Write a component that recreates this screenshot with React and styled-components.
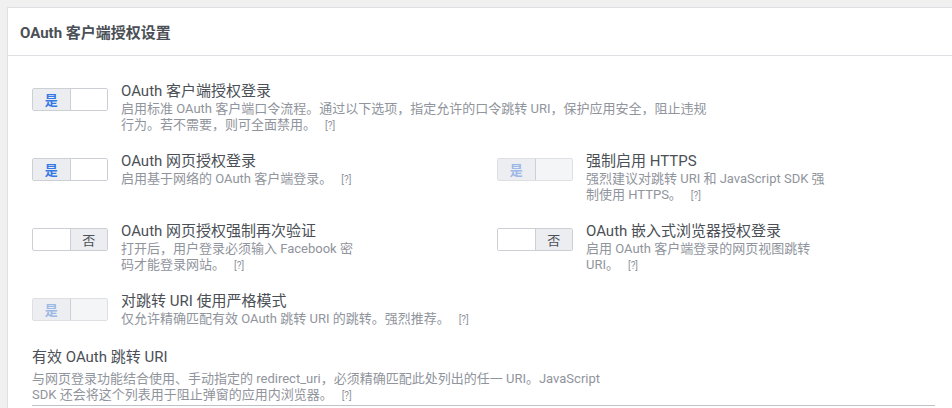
import React from "react";
import styled, { createGlobalStyle } from "styled-components";

const GlobalStyle = createGlobalStyle`
  html, body {
    margin: 0;
    padding: 0;
    background: #f0f0f0;
    overflow: hidden;
  }
  body {
    font-family: Roboto, "Noto Sans CJK SC", sans-serif;
  }
`;

const Page = styled.div`
  padding: 7px 0 0 7px;
  width: 945px;
  height: 401px;
  overflow: hidden;
`;

const Card = styled.div`
  width: 953px;
  background: #fff;
  border: 1px solid #dddfe2;
  border-right: none;
`;

const Header = styled.div`
  height: 47px;
  display: flex;
  align-items: center;
  padding: 0 12px;
  border-bottom: 1px solid #dddfe2;
  font-size: 15px;
  font-weight: bold;
  color: #4b4f56;
`;

const Body = styled.div`
  padding: 25px 25px 0 24px;
  display: flex;
  flex-direction: column;
  gap: 18px;
`;

const Grid = styled.div`
  display: grid;
  grid-template-columns: 465px 1fr;
`;

const Setting = styled.div`
  display: flex;
  align-items: flex-start;
  gap: 13px;
`;

const ToggleBox = styled.div`
  flex: none;
  margin-top: 7px;
  width: 76px;
  height: 23px;
  box-sizing: border-box;
  display: flex;
  border: 1px solid ${(p) => (p.$disabled ? "#dddfe2" : "#ccd0d5")};
  border-radius: 2px;
  overflow: hidden;
`;

const Half = styled.div`
  flex: 1;
  display: flex;
  align-items: center;
  justify-content: center;
  font-size: 13px;
  background: ${(p) =>
    p.$active ? (p.$disabled ? "#eceef1" : "#ebedf0") : p.$disabled ? "#f4f5f7" : "#fff"};
  color: ${(p) => (p.$yes ? (p.$disabled ? "#9db7e6" : "#3578e5") : "#4b4f56")};
  font-weight: ${(p) => (p.$yes ? "bold" : "normal")};
  & + & {
    border-left: 1px solid ${(p) => (p.$disabled ? "#dddfe2" : "#ccd0d5")};
  }
`;

const Text = styled.div`
  max-width: ${(p) => p.$width || 242}px;
`;

const Title = styled.div`
  font-size: 15px;
  line-height: 20px;
  color: #4b4f56;
`;

const Desc = styled.div`
  font-size: 13px;
  line-height: 16px;
  color: #90949c;
`;

const Help = styled.span`
  display: inline-block;
  font-size: 10px;
  line-height: 10px;
  margin-left: 9px;
  color: #90949c;
`;

const UriSection = styled.div`
  margin-top: 2px;
  max-width: 903px;
`;

const UriDesc = styled(Desc)`
  margin-top: 4px;
  max-width: 575px;
`;

const Input = styled.div`
  margin-top: 2px;
  height: 30px;
  border-top: 1px solid #bec3c9;
`;

const Toggle = ({ on, disabled }) => (
  <ToggleBox $disabled={disabled}>
    {on ? (
      <>
        <Half $active $yes $disabled={disabled}>是</Half>
        <Half $disabled={disabled} />
      </>
    ) : (
      <>
        <Half $disabled={disabled} />
        <Half $active $disabled={disabled}>否</Half>
      </>
    )}
  </ToggleBox>
);

const Item = ({ on, disabled, title, desc, width }) => (
  <Setting>
    <Toggle on={on} disabled={disabled} />
    <Text $width={width}>
      <Title>{title}</Title>
      <Desc>
        {desc}
        <Help>[?]</Help>
      </Desc>
    </Text>
  </Setting>
);

export default function App() {
  return (
    <>
      <GlobalStyle />
      <Page>
        <Card>
          <Header>OAuth 客户端授权设置</Header>
          <Body>
            <Item
              on
              width={590}
              title="OAuth 客户端授权登录"
              desc="启用标准 OAuth 客户端口令流程。通过以下选项，指定允许的口令跳转 URI，保护应用安全，阻止违规行为。若不需要，则可全面禁用。"
            />
            <Grid>
              <Item on title="OAuth 网页授权登录" desc="启用基于网络的 OAuth 客户端登录。" />
              <Item
                on
                disabled
                title="强制启用 HTTPS"
                desc="强烈建议对跳转 URI 和 JavaScript SDK 强制使用 HTTPS。"
              />
            </Grid>
            <Grid>
              <Item
                title="OAuth 网页授权强制再次验证"
                desc="打开后，用户登录必须输入 Facebook 密码才能登录网站。"
              />
              <Item
                title="OAuth 嵌入式浏览器授权登录"
                desc="启用 OAuth 客户端登录的网页视图跳转 URI。"
              />
            </Grid>
            <Item
              on
              disabled
              width={400}
              title="对跳转 URI 使用严格模式"
              desc="仅允许精确匹配有效 OAuth 跳转 URI 的跳转。强烈推荐。"
            />
            <UriSection>
              <Title>有效 OAuth 跳转 URI</Title>
              <UriDesc>
                与网页登录功能结合使用、手动指定的 redirect_uri，必须精确匹配此处列出的任一 URI。JavaScript SDK 还会将这个列表用于阻止弹窗的应用内浏览器。
                <Help>[?]</Help>
              </UriDesc>
              <Input />
            </UriSection>
          </Body>
        </Card>
      </Page>
    </>
  );
}
